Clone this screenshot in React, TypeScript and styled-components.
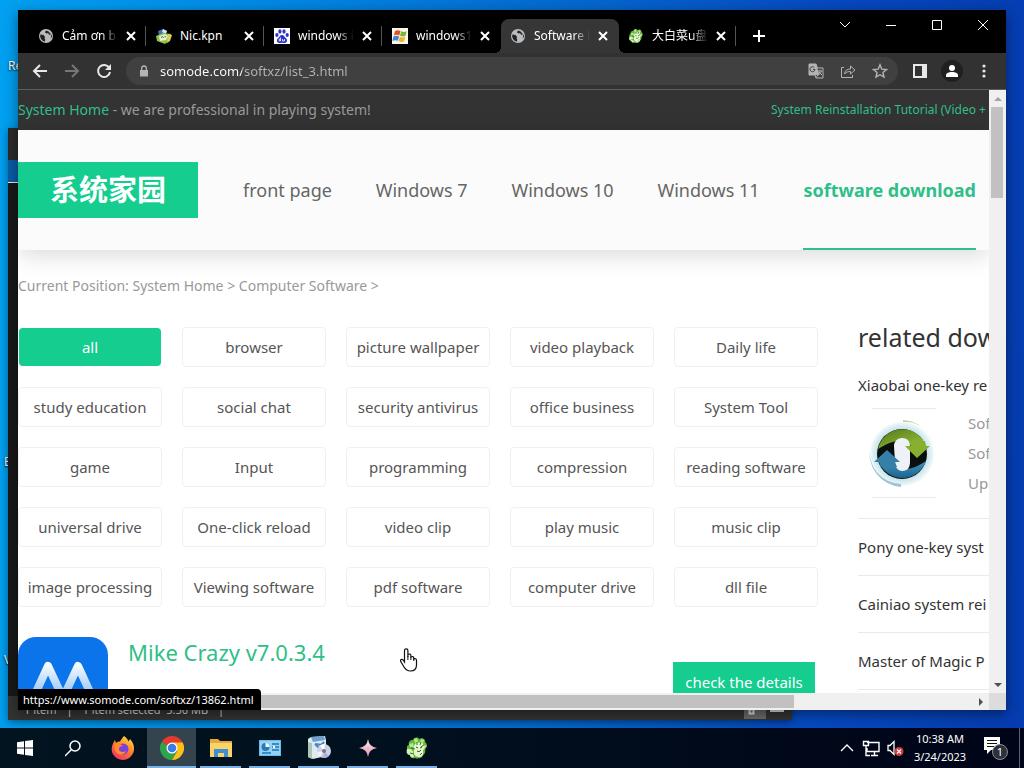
import React from "react";
import styled, { createGlobalStyle, css } from "styled-components";

const GREEN = "#14cd8f";
const LINK = "#2fbf88";

const GlobalStyle = createGlobalStyle`
  * { box-sizing: border-box; }
  body { margin: 0; overflow: hidden; font-family: "Noto Sans", "Noto Sans CJK SC", sans-serif; }
  button { font: inherit; border: 0; padding: 0; background: none; color: inherit; }
  a { color: inherit; text-decoration: none; }
  h1, h2, h3, p, ul { margin: 0; padding: 0; font-weight: 400; }
  li { list-style: none; }
  svg { display: block; flex: none; }
`;

/* ---------- desktop ---------- */

const Screen = styled.div`
  display: flex;
  flex-direction: column;
  height: 100vh;
`;

const Desktop = styled.main`
  position: relative;
  flex: 1;
  min-height: 0;
  overflow: hidden;
  background: linear-gradient(92deg, #02a0f0 0%, #0289e2 25%, #0568cf 55%, #0648be 80%, #053cb0 100%);
`;

const DesktopLabel = styled.span<{ $x: number; $y: number }>`
  position: absolute;
  left: ${(p) => p.$x}px;
  top: ${(p) => p.$y}px;
  color: #fff;
  font-size: 12px;
  line-height: 16px;
  text-shadow: 0 1px 2px #000;
`;

const ExplorerWindow = styled.section`
  position: absolute;
  left: 8px;
  top: 128px;
  bottom: 8px;
  width: 784px;
  display: flex;
  flex-direction: column;
  background: #191919;
  box-shadow: 0 2px 8px rgba(0, 0, 0, 0.4);
`;

const ExplorerTitle = styled.div`
  height: 32px;
  background: #2b2b2b;
`;

const ExplorerRibbon = styled.div`
  height: 23px;
  background: #0a5ca8;
  border-bottom: 1px solid #e8e8e8;
`;

const ExplorerBody = styled.div`
  flex: 1;
`;

const ExplorerStatus = styled.div`
  display: flex;
  align-items: center;
  gap: 10px;
  height: 24px;
  padding: 3px 0 0 16px;
  background: #333;
  color: #ddd;
  font-size: 11px;
  line-height: 16px;
`;

const ViewToggle = styled.span`
  display: flex;
  margin-left: auto;
`;

/* ---------- browser frame ---------- */

const BrowserWindow = styled.section`
  position: absolute;
  inset: 10px 18px 18px 18px;
  display: flex;
  flex-direction: column;
  background: #fff;
  box-shadow: 0 4px 12px rgba(0, 0, 0, 0.45);
`;

const TabStrip = styled.div`
  display: flex;
  flex: none;
  height: 43px;
  padding: 9px 0 0 11px;
  background: #000;
  color: #fff;
`;

const Tab = styled.div<{ $active?: boolean; $line?: boolean }>`
  position: relative;
  display: flex;
  align-items: center;
  gap: 8px;
  width: 118px;
  height: 34px;
  padding: 0 11px 0 9px;
  border-radius: 8px 8px 0 0;
  ${(p) =>
    p.$active &&
    css`
      background: #363636;
      &::before,
      &::after {
        content: "";
        position: absolute;
        bottom: 0;
        width: 6px;
        height: 6px;
      }
      &::before {
        right: 100%;
        background: radial-gradient(circle at 0 0, transparent 6px, #363636 6px);
      }
      &::after {
        left: 100%;
        background: radial-gradient(circle at 100% 0, transparent 6px, #363636 6px);
      }
    `}
  ${(p) =>
    p.$line &&
    css`
      &::after {
        content: "";
        position: absolute;
        right: 1px;
        top: 7px;
        width: 1px;
        height: 20px;
        background: #555;
      }
    `}
`;

const TabTitle = styled.button<{ $fade?: boolean }>`
  flex: 1;
  min-width: 0;
  overflow: hidden;
  white-space: nowrap;
  text-align: left;
  font-size: 12px;
  line-height: 18px;
  ${(p) => p.$fade && css`mask-image: linear-gradient(90deg, #000 70%, transparent 100%);`}
`;

const IconButton = styled.button<{ $w: number }>`
  display: flex;
  align-items: center;
  justify-content: center;
  flex: none;
  width: ${(p) => p.$w}px;
`;

const WindowControls = styled.div`
  display: flex;
  height: 12px;
  margin-left: auto;
`;

const Toolbar = styled.div`
  display: flex;
  align-items: center;
  flex: none;
  height: 37px;
  padding: 0 6px;
  background: #323232;
  border-bottom: 1px solid #5c5c5c;
  color: #e8e8e8;
`;

const Omnibox = styled.div`
  display: flex;
  align-items: center;
  flex: 1;
  height: 28px;
  margin: 0 6px;
  padding: 0 2px 0 8px;
  border-radius: 14px;
  background: #404040;
  color: #b4b4b4;
`;

const Address = styled.input`
  flex: 1;
  min-width: 0;
  margin-left: 6px;
  padding: 0;
  border: 0;
  outline: 0;
  font: 13px/20px "Noto Sans", sans-serif;
  color: transparent;
  background: linear-gradient(90deg, #fff 82px, #b4b4b4 82px);
  background-clip: text;
`;

const Avatar = styled.span`
  display: flex;
  align-items: center;
  justify-content: center;
  width: 22px;
  height: 22px;
  border-radius: 50%;
  background: #202020;
`;

const Viewport = styled.div`
  display: grid;
  flex: 1;
  min-height: 0;
  grid-template: minmax(0, 1fr) 17px / minmax(0, 1fr) 17px;
`;

const ScrollTrack = styled.div<{ $vertical?: boolean }>`
  display: flex;
  flex-direction: ${(p) => (p.$vertical ? "column" : "row")};
  justify-content: space-between;
  align-items: stretch;
  background: #f0f0f0;
`;

const ScrollArrow = styled.button`
  display: flex;
  align-items: center;
  justify-content: center;
  flex: none;
  width: 17px;
  height: 17px;
`;

const ThumbArea = styled.div`
  flex: 1;
`;

const VerticalThumb = styled.div`
  height: 16%;
  margin: 0 3px 0 2px;
  background: #c1c1c1;
`;

const HorizontalThumb = styled.div`
  width: 81%;
  height: 13px;
  margin-top: 2px;
  background: #c1c1c1;
`;

const Corner = styled.div`
  background: #dcdcdc;
`;

const StatusBubble = styled.div`
  position: absolute;
  left: 0;
  bottom: 0;
  height: 21px;
  padding: 0 7px 0 5px;
  border-radius: 0 4px 0 0;
  background: #000;
  color: #fff;
  font-size: 11px;
  line-height: 21px;
`;

const Pointer = styled.svg`
  position: absolute;
  left: 381px;
  top: 637px;
`;

/* ---------- web page ---------- */

const Page = styled.div`
  overflow: hidden;
  background: #fff;
  white-space: nowrap;
  color: #555;
  font-size: 15px;
  line-height: 20px;
`;

const TopBar = styled.div`
  display: flex;
  align-items: center;
  justify-content: space-between;
  height: 40px;
  padding-right: 3px;
  background: #333;
  color: #999;
  font-size: 14px;
`;

const GreenLink = styled.a<{ $small?: boolean }>`
  color: ${LINK};
  ${(p) => p.$small && css`font-size: 12px;`}
`;

const SiteHeader = styled.header`
  display: flex;
  align-items: center;
  height: 120px;
  padding-right: 13px;
  background: #fbfbfb;
  box-shadow: 0 4px 24px rgba(0, 0, 0, 0.16);
`;

const SiteLogo = styled.a`
  display: flex;
  align-items: center;
  justify-content: center;
  flex: none;
  width: 180px;
  height: 56px;
  padding-bottom: 4px;
  background: ${GREEN};
  color: #fff;
  font: 700 29px/40px "Noto Sans CJK SC", sans-serif;
`;

const SiteNav = styled.nav`
  display: flex;
  flex: 1;
  justify-content: space-between;
  align-self: stretch;
  margin-left: 45px;
`;

const NavLink = styled.a<{ $active?: boolean }>`
  display: flex;
  align-items: center;
  font-size: 18px;
  color: #666;
  ${(p) =>
    p.$active &&
    css`
      color: ${LINK};
      font-weight: 700;
      box-shadow: inset 0 -2px ${LINK};
    `}
`;

const Breadcrumb = styled.nav`
  padding: 26px 0 31px;
  color: #999;
  font-size: 14px;
`;

const Columns = styled.div`
  display: flex;
  gap: 40px;
`;

const MainColumn = styled.div`
  flex: none;
`;

const CategoryGrid = styled.ul`
  display: grid;
  grid-template-columns: repeat(5, 144px);
  grid-auto-rows: 40px;
  gap: 20px;
`;

const Category = styled.a<{ $active?: boolean }>`
  display: flex;
  align-items: center;
  justify-content: center;
  height: 40px;
  border: 1px solid #f0f0f0;
  border-radius: 4px;
  ${(p) =>
    p.$active &&
    css`
      border-color: #fff;
      background: ${GREEN};
      background-clip: padding-box;
      color: #fff;
    `}
`;

const SoftwareItem = styled.article`
  display: flex;
  align-items: flex-start;
  padding: 30px 3px 0 0;
`;

const SoftwareTitle = styled.h2`
  flex: 1;
  margin-left: 20px;
  color: ${LINK};
  font-size: 22px;
  line-height: 30px;
`;

const DetailsButton = styled.button`
  width: 142px;
  height: 40px;
  margin-top: 25px;
  background: ${GREEN};
  color: #fff;
`;

const Related = styled.aside`
  flex: 1;
  min-width: 0;
  overflow: hidden;
  color: #333;
`;

const RelatedHeading = styled.h2`
  margin-bottom: 28px;
  font-size: 25px;
  line-height: 20px;
`;

const RelatedCard = styled.div`
  display: flex;
  gap: 32px;
  margin: 13px 0 20px;
  padding-left: 14px;
`;

const Thumb = styled.div`
  width: 64px;
  height: 90px;
  display: flex;
  align-items: center;
  justify-content: center;
  border: solid #eaeaea;
  border-width: 1px 0;
`;

const RelatedFacts = styled.div`
  color: #999;
  line-height: 30px;
`;

const RelatedLink = styled.a`
  display: block;
  height: 57px;
  padding-top: 18px;
  border-top: 1px solid #eaeaea;
`;

/* ---------- taskbar ---------- */

const Taskbar = styled.footer`
  display: flex;
  flex: none;
  height: 40px;
  background: linear-gradient(90deg, #02141f 0%, #01101e 40%, #000418 100%);
  color: #fff;
`;

const TaskButton = styled.button<{ $state?: "open" | "active" }>`
  position: relative;
  display: flex;
  align-items: center;
  justify-content: center;
  width: 49px;
  background: ${(p) => (p.$state === "active" ? "#33444e" : "transparent")};
  ${(p) =>
    p.$state &&
    css`
      &::after {
        content: "";
        position: absolute;
        bottom: 0;
        left: ${p.$state === "active" ? 0 : 4}px;
        right: ${p.$state === "active" ? 0 : 4}px;
        height: 2px;
        background: #76b0e4;
      }
    `}
`;

const Tray = styled.div`
  display: flex;
  align-items: center;
  margin-left: auto;
`;

const Clock = styled.div`
  width: 66px;
  text-align: center;
  font-size: 11px;
  line-height: 18px;
`;

const ShowDesktop = styled.button`
  width: 5px;
  height: 40px;
  border-left: 1px solid #5a6470;
`;

/* ---------- drawings ---------- */

const Globe = () => (
  <svg width="16" height="16" viewBox="0 0 16 16">
    <circle cx="8" cy="8" r="7" fill="#b9bcbf" />
    <path d="M2.5 6.5l3 .6 1.6 1.8-.6 1.4.8 1.2-.5 2.2A6 6 0 0 1 2.3 6.5zM8.2 2.6L6.9 4.3l1.6 1.1 1.7-.3.6 1.4 2.9.3.3 1.9-1.3 1.8A5.8 5.8 0 0 0 8.2 2.6z" fill="#222" />
  </svg>
);

const NicIcon = () => (
  <svg width="16" height="16" viewBox="0 0 16 16">
    <path d="M2 3l5-2 4 2-3 4-5 1z" fill="#3a72b4" />
    <path d="M7 1l4 2-1 3-4-2z" fill="#d9e6ec" />
    <path d="M0 8l7-3 8 1-1 6-5 4-8-3z" fill="#8fc04c" />
    <path d="M3 8l6-2 3 2-2 4-6 1z" fill="#e7f0d4" />
    <path d="M5 9.500l1.500-1 1 1.500M8.500 8.500l1.500.5" stroke="#486b24" fill="none" />
    <path d="M12 6l4 1-2 6-3 2z" fill="#d9cf58" />
  </svg>
);

const BaiduIcon = () => (
  <svg width="16" height="16" viewBox="0 0 16 16">
    <rect width="16" height="16" fill="#fff" />
    <g fill="#2b33c8">
      <ellipse cx="2.9" cy="7" rx="1.6" ry="2.1" />
      <ellipse cx="5.9" cy="3.4" rx="1.6" ry="2.2" />
      <ellipse cx="10" cy="3.4" rx="1.6" ry="2.2" />
      <ellipse cx="13.2" cy="7" rx="1.6" ry="2.1" />
      <path d="M8 7c2 0 2.5 2 4 3.3 1.7 1.4 1.3 4.400-1 4.700-1 .1-2-.3-3-.3s-2 .4-3 .3c-2.300-.3-2.700-3.300-1-4.700C5.500 9 6 7 8 7z" />
    </g>
    <path d="M6.500 9.500v3.500h-1.300v-2h1.300M8.500 11v2h2v-2" fill="none" stroke="#fff" strokeWidth=".8" />
  </svg>
);

const WindowsFlag = () => (
  <svg width="16" height="16" viewBox="0 0 16 16">
    <rect width="16" height="16" fill="#fdf6ea" />
    <path d="M3 3c2-1 3.500-1 5.500 0L7.300 7.500c-2-.9-3.500-.9-5.500 0z" fill="#e0532a" />
    <path d="M9.200 3.300c2 .9 3.500.9 5.500 0l-1.200 4.500c-2 .9-3.500.9-5.500 0z" fill="#77b538" />
    <path d="M1.600 8.300c2-.9 3.500-.9 5.500 0l-1.200 4.500c-2-.9-3.500-.9-5.500 0z" fill="#3b86d6" />
    <path d="M7.800 8.700c2 .9 3.500.9 5.500 0l-1.200 4.500c-2 .9-3.500.9-5.500 0z" fill="#f2b52a" />
  </svg>
);

const Cabbage = ({ size }: { size: number }) => (
  <svg width={size} height={size} viewBox="0 0 24 24">
    <path d="M8 4c1-3 5-3 6-1 3-2 7 0 6 3 3 2 2 5 0 6 1 3 0 6-2 7-1 4-6 4-8 3-3 1-5-1-5-3-3 0-5-3-2-5-2-2-1-5 1-5-1-3 1-5 4-5z" fill="#62b83c" />
    <path d="M9 3l3-1 1 4-3 1zM16 3l3 1-1 4-3-1zM4 8l4-1 1 4-4 0zM19 9l3 1-2 3-2-1z" fill="#b6e486" />
    <path d="M10 8c2-2 6-2 8 0 2 2 1 5 0 7 1 4-1 6-4 6-4 0-6-3-5-7-1-2 0-4 1-6z" fill="#e8f6d0" />
    <path d="M2 13c3-1 6 1 6 3l1 5c-2 1-4 0-4-2-2 0-4-3-3-6z" fill="#d5efb6" />
    <path d="M12 6l0 3M16 6l-1 3M19 9l-3 2M6 12l4 1M5 17l4 1M17 17l-2 2" stroke="#2f7d1f" strokeWidth="1" fill="none" />
    <path d="M11 11l2 1M17 11l-2 1M12 15q2 2 4-1" stroke="#2c5a1c" fill="none" />
  </svg>
);

const Stroke = ({ d, size = 16, width = 2, color = "currentColor" }: { d: string; size?: number; width?: number; color?: string }) => (
  <svg width={size} height={size} viewBox={`0 0 ${size} ${size}`} fill="none" stroke={color} strokeWidth={width}>
    <path d={d} />
  </svg>
);

const MikeIcon = () => (
  <svg width="90" height="90" viewBox="0 0 90 90">
    <defs>
      <linearGradient id="peak" x1="0" y1="25" x2="0" y2="65" gradientUnits="userSpaceOnUse">
        <stop offset="0" stopColor="#fff" />
        <stop offset="1" stopColor="#7db9f7" />
      </linearGradient>
    </defs>
    <rect width="90" height="90" rx="18" fill="#0b74ea" />
    <path d="M13 66L30 29L45 61L60 29L77 66" fill="none" stroke="url(#peak)" strokeWidth="8" strokeLinejoin="round" strokeLinecap="round" />
  </svg>
);

const RecycleLogo = () => (
  <svg width="70" height="76" viewBox="0 0 70 76">
    <defs>
      <linearGradient id="lime" x1="0" y1="0" x2="1" y2="1">
        <stop offset="0" stopColor="#55761a" />
        <stop offset="1" stopColor="#9bc83b" />
      </linearGradient>
      <linearGradient id="sea" x1="0" y1="0" x2="0" y2="1">
        <stop offset="0" stopColor="#4592b8" />
        <stop offset="1" stopColor="#1c6390" />
      </linearGradient>
      <radialGradient id="halo">
        <stop offset=".75" stopColor="#bfe0e8" />
        <stop offset="1" stopColor="#f4fafb" />
      </radialGradient>
    </defs>
    <circle cx="33" cy="39" r="32" fill="url(#halo)" />
    <path d="M34 5a34 34 0 0 1 32 40a30 32 0 0 0-32-38z" fill="#c3d3a6" />
    <path d="M1 32a34 34 0 0 0 31 40v-3a32 32 0 0 1-31-37z" fill="#9cc6d4" />
    <circle cx="33" cy="39" r="25" fill="#0a0f0d" />
    <path d="M9 34A25 25 0 0 1 57 31H42C38 23 24 24 9 34z" fill="url(#lime)" />
    <path d="M57 46A25 25 0 0 1 10 47H25C29 58 44 55 57 46z" fill="url(#sea)" />
    <path d="M33 23c6 0 8 4 8 8v16c0 5-2 9-8 9-4 0-7-4-7-9l-1-16c0-4 3-8 8-8z" fill="#eef1f8" />
    <path d="M36 31H42L40 26H56L57 31H61L48 43z" fill="#86b02e" />
    <path d="M5 47L18 35L31 47H26L28 52H12L10 47z" fill="#3580a8" />
  </svg>
);

const Firefox = () => (
  <svg width="24" height="24" viewBox="0 0 24 24">
    <defs>
      <linearGradient id="fox" x1=".8" y1="0" x2=".2" y2="1">
        <stop offset="0" stopColor="#ffdf3c" />
        <stop offset=".5" stopColor="#ff7a2c" />
        <stop offset="1" stopColor="#ee2a70" />
      </linearGradient>
    </defs>
    <path d="M13 0c3 2 4 4 4.500 5.500L19 3c3 3 4.500 7 4 11-1 6-6 10-11 10S1 20 .7 14C.5 10 2 7 4 4l1 3c1-1 2-1.500 4-1.500C10 4 11 2 13 0z" fill="url(#fox)" />
    <circle cx="12" cy="13" r="5.500" fill="#7a42dc" />
    <path d="M4 8c3-1 6 0 8 2-3 0-4 1-4 3 0 3 4 4 7 2-1 4-7 5-10 1-2-3-2-6-1-8z" fill="#ff8c2a" />
  </svg>
);

const Chrome = () => (
  <svg width="24" height="24" viewBox="0 0 24 24">
    <path d="M12 12L1.600 6A12 12 0 0 1 22.400 6z" fill="#e33b2e" />
    <path d="M12 12L1.600 6A12 12 0 0 0 12 24l5.200-9z" fill="#2ea24c" />
    <path d="M12 6h10.400A12 12 0 0 1 12 24l5.200-9z" fill="#fbc116" />
    <path d="M12 6.500h10.600L22.400 6H12z" fill="#e33b2e" />
    <circle cx="12" cy="12" r="5.500" fill="#fff" />
    <circle cx="12" cy="12" r="4.300" fill="#3b7de8" />
  </svg>
);

const Folder = () => (
  <svg width="22" height="20" viewBox="0 0 22 20">
    <path d="M0 1h8l2 2h12v16H0z" fill="#e6a93a" />
    <path d="M0 5h22v14H0z" fill="#fbd36b" />
    <path d="M4 19v-8h14v8h-4v-4H8v4z" fill="#3d8fce" />
  </svg>
);

const ControlPanel = () => (
  <svg width="22" height="16" viewBox="0 0 22 16">
    <rect width="22" height="16" fill="#68bdea" />
    <rect x="1" y="1" width="20" height="14" fill="#90d3f3" />
    <circle cx="6.500" cy="7" r="4" fill="#2d78ba" />
    <path d="M6.500 7V3a4 4 0 0 1 4 4z" fill="#fff" />
    <path d="M13 4h7M13 7h7M13 10h7M3 13h9" stroke="#1f74b6" strokeWidth="1.500" />
    <circle cx="15" cy="7" r="1.200" fill="#fff" />
  </svg>
);

const Installer = () => (
  <svg width="24" height="24" viewBox="0 0 24 24">
    <path d="M1 3l3-2 14-1 1 4v16l-13 3-5-2z" fill="#dfe9f2" />
    <path d="M1 6l4 1v16l-4-2z" fill="#a9c7b4" />
    <path d="M4 1l13-1 1 4-12 2z" fill="#6f9fd0" />
    <path d="M8 8l4 4 5-6M8 8l8 1" stroke="#4c86be" strokeWidth="2" fill="none" />
    <circle cx="17" cy="15" r="7" fill="#cdd0e8" />
    <path d="M17 15l-4-5a7 7 0 0 1 5-2z" fill="#fff" />
    <path d="M17 15l5 5a7 7 0 0 1-6 2z" fill="#a8b4dd" />
    <path d="M17 15l-7 1a7 7 0 0 0 3 5z" fill="#f4f0fa" />
    <circle cx="17" cy="15" r="2" fill="#778" />
  </svg>
);

const Sparkle = () => (
  <svg width="18" height="18" viewBox="0 0 18 18">
    <defs>
      <linearGradient id="spark" x1="0" y1="0" x2="0" y2="1">
        <stop offset="0" stopColor="#fff0e8" />
        <stop offset="1" stopColor="#e08ab4" />
      </linearGradient>
    </defs>
    <path d="M9 0q1 8 9 9-8 1-9 9-1-8-9-9 8-1 9-9z" fill="url(#spark)" />
  </svg>
);

const Triangle = ({ d, color }: { d: string; color: string }) => (
  <svg width="8" height="8" viewBox="0 0 8 8">
    <path d={d} fill={color} />
  </svg>
);

/* ---------- content ---------- */

const tabs = [
  { title: "Cảm ơn bạn", icon: <Globe />, fade: true, line: true },
  { title: "Nic.kpn", icon: <NicIcon />, line: true },
  { title: "windows i", icon: <BaiduIcon />, fade: true, line: true },
  { title: "windows1", icon: <WindowsFlag />, fade: true },
  { title: "Software D", icon: <Globe />, fade: true, active: true },
  { title: "大白菜u盘", icon: <Cabbage size={16} />, fade: true, line: true },
];

const categories = [
  "all", "browser", "picture wallpaper", "video playback", "Daily life",
  "study education", "social chat", "security antivirus", "office business", "System Tool",
  "game", "Input", "programming", "compression", "reading software",
  "universal drive", "One-click reload", "video clip", "play music", "music clip",
  "image processing", "Viewing software", "pdf software", "computer drive", "dll file",
];

const navItems = ["front page", "Windows 7", "Windows 10", "Windows 11", "software download"];

const tasks: { name: string; icon: React.ReactNode; state?: "open" | "active" }[] = [
  {
    name: "Start",
    icon: (
      <svg width="16" height="16" viewBox="0 0 16 16">
        <path d="M0 2.300L7 1.300v6.300H0zM8 1.100L16 0v7.600H8zM0 8.400h7v6.300l-7-1zM8 8.400h8V16l-8-1.100z" fill="#fff" />
      </svg>
    ),
  },
  {
    name: "Search",
    icon: (
      <svg width="18" height="18" viewBox="0 0 18 18" fill="none" stroke="#fff" strokeWidth="1.500">
        <circle cx="10" cy="7" r="5" />
        <path d="M6.500 10.500L0 17" />
      </svg>
    ),
  },
  { name: "Firefox", icon: <Firefox /> },
  { name: "Chrome", icon: <Chrome />, state: "active" },
  { name: "File Explorer", icon: <Folder />, state: "open" },
  { name: "Control Panel", icon: <ControlPanel />, state: "open" },
  { name: "Installer", icon: <Installer />, state: "open" },
  { name: "Sparkle", icon: <Sparkle />, state: "open" },
  { name: "Dabaicai", icon: <Cabbage size={24} />, state: "open" },
];

const Browser = () => (
  <BrowserWindow aria-label="Browser">
    <TabStrip>
      {tabs.map((t) => (
        <Tab key={t.title} $active={t.active} $line={t.line}>
          {t.icon}
          <TabTitle $fade={t.fade}>{t.title}</TabTitle>
          <IconButton $w={10} aria-label="Close tab">
            <Stroke size={10} d="M1 1l8 8M9 1l-8 8" />
          </IconButton>
        </Tab>
      ))}
      <IconButton $w={44} aria-label="New tab">
        <Stroke size={12} d="M6 0v12M0 6h12" />
      </IconButton>
      <WindowControls>
        <IconButton $w={46} aria-label="Search tabs"><Stroke size={12} width={1} d="M1 3l5 5 5-5" /></IconButton>
        <IconButton $w={46} aria-label="Minimize"><Stroke size={12} width={1} d="M1 6.500h10" /></IconButton>
        <IconButton $w={46} aria-label="Maximize"><Stroke size={12} width={1} d="M1.500 1.500h9v9h-9z" /></IconButton>
        <IconButton $w={46} aria-label="Close"><Stroke size={12} width={1} d="M1 1l10 10M11 1L1 11" /></IconButton>
      </WindowControls>
    </TabStrip>

    <Toolbar>
      <IconButton $w={32} aria-label="Back"><Stroke d="M15 8H2M8 2L2 8l6 6" /></IconButton>
      <IconButton $w={32} aria-label="Forward"><Stroke color="#777" d="M1 8h13M8 2l6 6-6 6" /></IconButton>
      <IconButton $w={32} aria-label="Reload">
        <svg width="16" height="16" viewBox="0 0 16 16">
          <path d="M13.200 4.800A6 6 0 1 0 14 9" fill="none" stroke="currentColor" strokeWidth="2" />
          <path d="M15 1v6H9z" fill="currentColor" />
        </svg>
      </IconButton>
      <Omnibox>
        <IconButton $w={20} aria-label="Site information">
          <svg width="10" height="12" viewBox="0 0 10 12">
            <path d="M1 5h8v6.500H1z" fill="currentColor" />
            <path d="M2.700 5V3.300a2.300 2.300 0 0 1 4.600 0V5" fill="none" stroke="currentColor" strokeWidth="1.300" />
          </svg>
        </IconButton>
        <Address aria-label="Address" defaultValue="somode.com/softxz/list_3.html" />
        <IconButton $w={32} aria-label="Translate this page">
          <svg width="16" height="16" viewBox="0 0 16 16">
            <path d="M1 1h7l1.500 4H15v10H8l-1-3H1z" fill="none" stroke="currentColor" />
            <path d="M1 1h7l3.500 11H1z" fill="currentColor" />
            <path d="M7 6.500H5M7 6.500a2.500 2.500 0 1 1-.7-2" fill="none" stroke="#404040" />
            <path d="M10 8h4M12 7v1M13.500 8c-.5 2-2 3-3 4M11 9l3 3M8 14.500l2-2.500" fill="none" stroke="currentColor" />
          </svg>
        </IconButton>
        <IconButton $w={32} aria-label="Share">
          <Stroke width={1} d="M4 4.500H1.500v10h11V12M4.500 11c.5-3.500 2.500-5 6-5V3l4.500 4-4.500 4V8.500c-2.500 0-4.500.5-6 2.500z" />
        </IconButton>
        <IconButton $w={32} aria-label="Bookmark this tab">
          <Stroke width={1.4} d="M8 1.800l1.800 4.300 4.700.4-3.600 3 1.100 4.600L8 11.700 4 14.100l1.100-4.600-3.600-3 4.700-.4z" />
        </IconButton>
      </Omnibox>
      <IconButton $w={32} aria-label="Side panel">
        <svg width="14" height="14" viewBox="0 0 14 14">
          <path d="M0 0h14v14H0zM2 2v10h7V2z" fill="currentColor" fillRule="evenodd" />
        </svg>
      </IconButton>
      <IconButton $w={32} aria-label="Profile">
        <Avatar>
          <svg width="12" height="12" viewBox="0 0 12 12" fill="#fff">
            <circle cx="6" cy="3" r="3" />
            <path d="M0 12v-2c0-2 3-3 6-3s6 1 6 3v2z" />
          </svg>
        </Avatar>
      </IconButton>
      <IconButton $w={32} aria-label="Menu">
        <svg width="4" height="14" viewBox="0 0 4 14" fill="currentColor">
          <circle cx="2" cy="2" r="1.600" />
          <circle cx="2" cy="7" r="1.600" />
          <circle cx="2" cy="12" r="1.600" />
        </svg>
      </IconButton>
    </Toolbar>

    <Viewport>
      <Page>
        <TopBar>
          <p><GreenLink href="#home">System Home</GreenLink> - we are professional in playing system!</p>
          <GreenLink $small href="#tutorial">System Reinstallation Tutorial (Video +</GreenLink>
        </TopBar>
        <SiteHeader>
          <SiteLogo href="#home">系统家园</SiteLogo>
          <SiteNav>
            {navItems.map((n, i) => (
              <NavLink key={n} href="#nav" $active={i === 4}>{n}</NavLink>
            ))}
          </SiteNav>
        </SiteHeader>
        <Breadcrumb>
          Current Position: <a href="#home">System Home</a> &gt; <a href="#software">Computer Software</a> &gt;
        </Breadcrumb>
        <Columns>
          <MainColumn>
            <CategoryGrid>
              {categories.map((c, i) => (
                <li key={c}><Category href="#category" $active={i === 0}>{c}</Category></li>
              ))}
            </CategoryGrid>
            <SoftwareItem>
              <MikeIcon />
              <SoftwareTitle>Mike Crazy v7.0.3.4</SoftwareTitle>
              <DetailsButton>check the details</DetailsButton>
            </SoftwareItem>
          </MainColumn>
          <Related>
            <RelatedHeading>related dow</RelatedHeading>
            <a href="#xiaobai">Xiaobai one-key re</a>
            <RelatedCard>
              <Thumb><RecycleLogo /></Thumb>
              <RelatedFacts>
                <p>Sof</p>
                <p>Sof</p>
                <p>Upd</p>
              </RelatedFacts>
            </RelatedCard>
            <RelatedLink href="#pony">Pony one-key syst</RelatedLink>
            <RelatedLink href="#cainiao">Cainiao system rei</RelatedLink>
            <RelatedLink href="#magic">Master of Magic P</RelatedLink>
            <RelatedLink as="div" />
          </Related>
        </Columns>
      </Page>
      <ScrollTrack $vertical>
        <ScrollArrow aria-label="Scroll up"><Triangle d="M0 6l4-4 4 4z" color="#a3a3a3" /></ScrollArrow>
        <ThumbArea><VerticalThumb /></ThumbArea>
        <ScrollArrow aria-label="Scroll down"><Triangle d="M0 2h8L4 6z" color="#505050" /></ScrollArrow>
      </ScrollTrack>
      <ScrollTrack>
        <ScrollArrow aria-label="Scroll left"><Triangle d="M6 0v8L2 4z" color="#a3a3a3" /></ScrollArrow>
        <ThumbArea><HorizontalThumb /></ThumbArea>
        <ScrollArrow aria-label="Scroll right"><Triangle d="M2 0v8l4-4z" color="#505050" /></ScrollArrow>
      </ScrollTrack>
      <Corner />
    </Viewport>
    <StatusBubble>https://www.somode.com/softxz/13862.html</StatusBubble>
    <Pointer width="20" height="26" viewBox="0 0 20 26">
      <path d="M5.500 15V3.500a1.700 1.700 0 0 1 3.400 0V10 7.500c1.500-1 3-.3 3 1.200V10c1.200-1 2.900-.4 2.900 1v1c1.200-.8 2.700-.2 2.700 1.200V18c0 4-2.500 6-6 6-3.200 0-5-1.500-6.500-4l-3.500-6c0-2 2-2 3-.5z" fill="#fff" stroke="#111" strokeWidth="1.200" />
      <path d="M8.900 9v4M11.900 10v3M14.800 11v3" stroke="#111" />
    </Pointer>
  </BrowserWindow>
);

export default function App() {
  return (
    <Screen>
      <GlobalStyle />
      <Desktop>
        <DesktopLabel $x={8} $y={58}>Re</DesktopLabel>
        <DesktopLabel $x={4} $y={454}>E</DesktopLabel>
        <DesktopLabel $x={4} $y={652}>V</DesktopLabel>
        <ExplorerWindow aria-label="File Explorer">
          <ExplorerTitle />
          <ExplorerRibbon />
          <ExplorerBody />
          <ExplorerStatus>
            <span>1 item</span><span>|</span><span>1 item selected&nbsp; 5.56 MB</span><span>|</span>
            <ViewToggle>
              <svg width="48" height="22" viewBox="0 0 48 22">
                <path d="M0 0h22v20H0z" fill="#6a6a6a" />
                <path d="M5.500 10.500h4v4h-4zM26 12h14" fill="none" stroke="#ddd" strokeWidth="2" />
              </svg>
            </ViewToggle>
          </ExplorerStatus>
        </ExplorerWindow>
        <Browser />
      </Desktop>
      <Taskbar>
        {tasks.map((t) => (
          <TaskButton key={t.name} aria-label={t.name} $state={t.state}>{t.icon}</TaskButton>
        ))}
        <Tray>
          <IconButton $w={24} aria-label="Show hidden icons"><Stroke width={1.400} d="M2 11l6-6 6 6" /></IconButton>
          <IconButton $w={24} aria-label="Network">
            <Stroke size={18} width={1.400} d="M5 3.500h12v9H5V9M9 16.500h7M12.500 12.500v4M1.500 2.500h5v4h-5zM4 6.500v10h4" />
          </IconButton>
          <IconButton $w={24} aria-label="Volume">
            <svg width="18" height="18" viewBox="0 0 18 18">
              <path d="M2 6.500h2l4-4v13l-4-4H2z" fill="none" stroke="#fff" strokeWidth="1.300" />
              <circle cx="13" cy="12.500" r="4.500" fill="#d23a3a" />
              <path d="M11 10.500l4 4M15 10.500l-4 4" stroke="#fff" strokeWidth="1.200" />
            </svg>
          </IconButton>
          <Clock><div>10:38 AM</div><div>3/24/2023</div></Clock>
          <IconButton $w={46} aria-label="1 new notification">
            <svg width="26" height="26" viewBox="0 0 26 26">
              <path d="M1 2h16v13h-9l-4 4v-4H1z" fill="#fff" />
              <path d="M4 5.500h10M4 8.500h10M4 11.500h7" stroke="#111" />
              <circle cx="17" cy="17" r="7.500" fill="#2c3038" stroke="#8a8f96" />
              <text x="17" y="21" textAnchor="middle" fontSize="11" fill="#fff">1</text>
            </svg>
          </IconButton>
          <ShowDesktop aria-label="Show desktop" />
        </Tray>
      </Taskbar>
    </Screen>
  );
}
